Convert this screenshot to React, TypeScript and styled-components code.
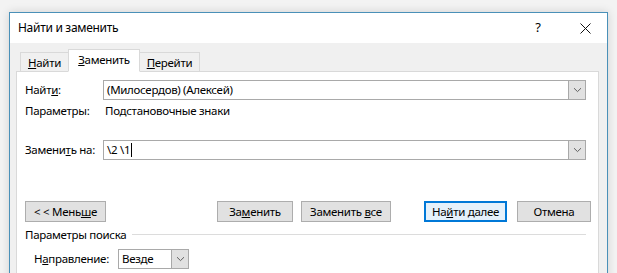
import styled, {createGlobalStyle} from 'styled-components';

const GlobalStyle = createGlobalStyle`
  html, body {
    margin: 0;
    padding: 0;
    background: #f3f3f3;
  }
  body {
    font-family: 'Noto Sans', 'Segoe UI', sans-serif;
    font-size: 11.5px;
    letter-spacing: -0.3px;
    color: #000;
  }
`;

const Page = styled.div`
  width: 617px;
  height: 273px;
  overflow: hidden;
  padding: 12px 0 0 9px;
  box-sizing: border-box;
  background: #f3f3f3;
`;

const Window = styled.div`
  width: 599px;
  height: 300px;
  box-sizing: border-box;
  border: 1px solid #4a90b8;
  background: #f0f0f0;
  box-shadow: 0 0 9px rgba(0, 0, 0, 0.14);
  display: flex;
  flex-direction: column;
`;

const TitleBar = styled.div`
  height: 30px;
  background: #fff;
  display: flex;
  align-items: center;
  padding-left: 8px;
`;

const Title = styled.div`
  flex: 1;
  font-size: 12px;
  padding-bottom: 2px;
`;

const HelpButton = styled.div`
  width: 20px;
  text-align: center;
  margin-right: 17px;
  font-size: 13px;
  padding-bottom: 2px;
`;

const CloseButton = styled.div`
  width: 40px;
  display: flex;
  justify-content: center;
  margin-right: 2px;
`;

const Body = styled.div`
  flex: 1;
  display: flex;
  flex-direction: column;
  padding: 7px 8px 0 6px;
`;

const TabStrip = styled.div`
  display: flex;
  align-items: flex-end;
  padding-left: 4px;
  height: 22px;
  margin-bottom: -1px;
  position: relative;
  z-index: 1;
`;

const Tab = styled.div<{$active?: boolean; $w: number}>`
  width: ${p => p.$w}px;
  box-sizing: border-box;
  height: ${p => (p.$active ? 23 : 20)}px;
  border: 1px solid #d9d9d9;
  border-bottom: ${p => (p.$active ? '1px solid #fff' : '1px solid #d9d9d9')};
  border-left: ${p => (p.$active ? '1px solid #d9d9d9' : 'none')};
  border-right: ${p => (p.$active ? '1px solid #d9d9d9' : 'none')};
  background: ${p => (p.$active ? '#fff' : '#f0f0f0')};
  display: flex;
  align-items: center;
  justify-content: center;
  padding-bottom: ${p => (p.$active ? 2 : 0)}px;

  &:first-child {
    border-left: 1px solid #d9d9d9;
  }
  &:last-child {
    border-right: 1px solid #d9d9d9;
  }
`;

const TabPage = styled.div`
  flex: 1;
  background: #fff;
  border: 1px solid #d9d9d9;
  padding: 8px 7px 0 8px;
  display: flex;
  flex-direction: column;
`;

const FieldRow = styled.div<{$mt?: number; $indent?: number}>`
  display: flex;
  align-items: center;
  height: 20px;
  margin-top: ${p => p.$mt ?? 0}px;
  padding-left: ${p => p.$indent ?? 0}px;
`;

const Label = styled.div<{$w: number}>`
  width: ${p => p.$w}px;
  flex-shrink: 0;
  padding-bottom: 1px;
`;

const Value = styled.div`
  padding-left: 2px;
  padding-bottom: 1px;
`;

const Combo = styled.div<{$w?: number}>`
  ${p => (p.$w ? `width: ${p.$w}px;` : 'flex: 1;')}
  height: 20px;
  box-sizing: border-box;
  border: 1px solid #a9a9a9;
  display: flex;
  align-items: stretch;
  background: #fff;
  margin-right: ${p => (p.$w ? 0 : 5)}px;
`;

const ComboText = styled.div`
  flex: 1;
  display: flex;
  align-items: center;
  padding-left: 3px;
  padding-bottom: 1px;
  white-space: pre;
`;

const Caret = styled.span`
  display: inline-block;
  width: 1px;
  height: 14px;
  background: #000;
  margin-left: 1px;
`;

const DropButton = styled.div`
  width: 16px;
  background: #e1e1e1;
  border-left: 1px solid #a9a9a9;
  display: flex;
  align-items: center;
  justify-content: center;
`;

const ButtonRow = styled.div`
  display: flex;
  align-items: center;
  margin-top: 41px;
`;

const Spacer = styled.div`
  flex: 1;
`;

const Button = styled.div<{$w: number; $ml?: number; $default?: boolean}>`
  width: ${p => p.$w}px;
  height: 21px;
  box-sizing: border-box;
  margin-left: ${p => p.$ml ?? 0}px;
  border: 1px solid ${p => (p.$default ? '#0078d7' : '#adadad')};
  box-shadow: ${p => (p.$default ? 'inset 0 0 0 1px #0078d7' : 'none')};
  background: ${p => (p.$default ? '#e5f1fb' : '#e1e1e1')};
  display: flex;
  align-items: center;
  justify-content: center;
  padding-bottom: 1px;
`;

const GroupHeader = styled.div`
  display: flex;
  align-items: center;
  height: 20px;
  margin-top: 2px;
  margin-right: 5px;
  gap: 6px;
`;

const GroupLine = styled.div`
  flex: 1;
  height: 1px;
  background: #dcdcdc;
`;

const Chevron = () => (
  <svg width="9" height="6" viewBox="0 0 9 6">
    <path d="M1 1.2 L4.5 4.6 L8 1.2" fill="none" stroke="#606060" strokeWidth="1" />
  </svg>
);

const CloseIcon = () => (
  <svg width="11" height="11" viewBox="0 0 11 11">
    <path d="M0.5 0.5 L10.5 10.5 M10.5 0.5 L0.5 10.5" stroke="#111" strokeWidth="1" />
  </svg>
);

export default function App() {
  return (
    <>
      <GlobalStyle />
      <Page>
        <Window>
          <TitleBar>
            <Title>Найти и заменить</Title>
            <HelpButton>?</HelpButton>
            <CloseButton>
              <CloseIcon />
            </CloseButton>
          </TitleBar>
          <Body>
            <TabStrip>
              <Tab $w={48}>
                <span>
                  <u>Н</u>айти
                </span>
              </Tab>
              <Tab $w={72} $active>
                <span>
                  <u>З</u>аменить
                </span>
              </Tab>
              <Tab $w={60}>
                <span>
                  <u>П</u>ерейти
                </span>
              </Tab>
            </TabStrip>
            <TabPage>
              <FieldRow>
                <Label $w={78}>
                  Найт<u>и</u>:
                </Label>
                <Combo>
                  <ComboText>(Милосердов) (Алексей)</ComboText>
                  <DropButton>
                    <Chevron />
                  </DropButton>
                </Combo>
              </FieldRow>
              <FieldRow $mt={1}>
                <Label $w={78}>Параметры:</Label>
                <Value>Подстановочные знаки</Value>
              </FieldRow>
              <FieldRow $mt={19}>
                <Label $w={78}>
                  Замени<u>т</u>ь на:
                </Label>
                <Combo>
                  <ComboText>
                    {'\\2 \\1'}
                    <Caret />
                  </ComboText>
                  <DropButton>
                    <Chevron />
                  </DropButton>
                </Combo>
              </FieldRow>
              <ButtonRow>
                <Button $w={81}>
                  <span>
                    &lt; &lt; Мень<u>ш</u>е
                  </span>
                </Button>
                <Spacer />
                <Button $w={76}>
                  <span>
                    За<u>м</u>енить
                  </span>
                </Button>
                <Button $w={90} $ml={8}>
                  <span>
                    Заменить <u>в</u>се
                  </span>
                </Button>
                <Button $w={83} $ml={33} $default>
                  <span>
                    На<u>й</u>ти далее
                  </span>
                </Button>
                <Button $w={74} $ml={10}>
                  Отмена
                </Button>
              </ButtonRow>
              <GroupHeader>
                <span>Параметры поиска</span>
                <GroupLine />
              </GroupHeader>
              <FieldRow $mt={5} $indent={9}>
                <Label $w={84}>
                  Н<u>а</u>правление:
                </Label>
                <Combo $w={71}>
                  <ComboText>Везде</ComboText>
                  <DropButton>
                    <Chevron />
                  </DropButton>
                </Combo>
              </FieldRow>
            </TabPage>
          </Body>
        </Window>
      </Page>
    </>
  );
}
